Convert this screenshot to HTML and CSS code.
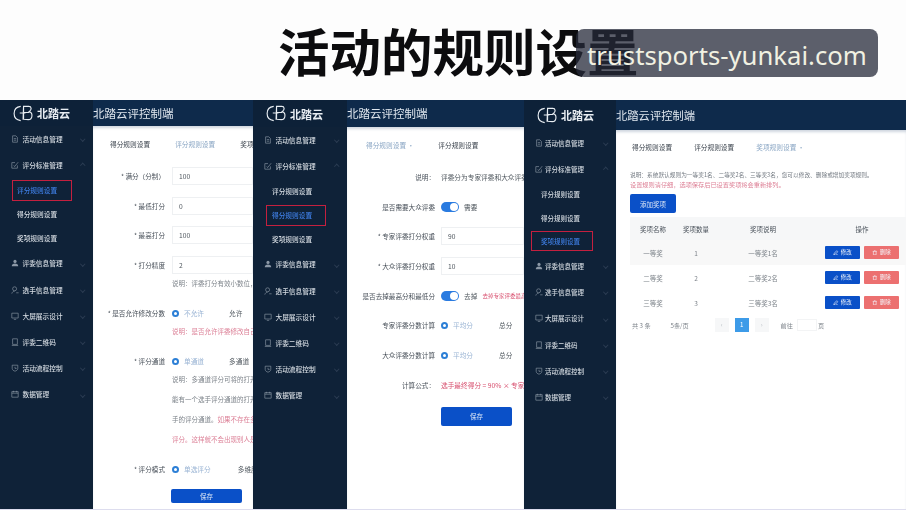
FILE: index.html
```html
<!DOCTYPE html>
<html lang="zh">
<head>
<meta charset="utf-8">
<title>活动的规则设置</title>
<link rel="stylesheet" href="styles.css">
</head>
<body>
<svg class="defs" aria-hidden="true">
  <symbol id="logo" viewBox="0 0 24 18"><path d="M8 1.500C3.500 2 1 5 1 9s2.500 7 7 7.500M11 1.500h5.500c3 0 3.500 3.500.5 5.500 4 1 4 8.500-1 8.500-3 0-5-.5-5.500-.5zM11 8h6M7 8.500h6M11 1.500v14" fill="none" stroke="currentColor" stroke-width="1.200"/></symbol>
  <symbol id="i-doc" viewBox="0 0 10 10"><path d="M2 1h4l2 2v6H2zM3.500 4.500h3M3.500 6.500h3" fill="none" stroke="currentColor" stroke-width=".8"/></symbol>
  <symbol id="i-edit" viewBox="0 0 10 10"><path d="M8 5.500V9H1V2h4M3.500 5.500l1 1.500L9 1.500" fill="none" stroke="currentColor" stroke-width=".8"/></symbol>
  <symbol id="i-user" viewBox="0 0 10 10"><circle cx="5" cy="3" r="2" fill="currentColor"/><path d="M1 9c0-2.500 1.500-3.500 4-3.500s4 1 4 3.500z" fill="currentColor"/></symbol>
  <symbol id="i-person" viewBox="0 0 10 10"><circle cx="4.500" cy="3.500" r="2.500" fill="none" stroke="currentColor" stroke-width=".8"/><path d="M1 9.500c.5-2 2-3 3.500-3M6.500 8.500h3" fill="none" stroke="currentColor" stroke-width=".8"/></symbol>
  <symbol id="i-screen" viewBox="0 0 10 10"><path d="M1 1.500h8v6H1zM3.500 9.200h3" fill="none" stroke="currentColor" stroke-width=".8"/></symbol>
  <symbol id="i-tablet" viewBox="0 0 10 10"><path d="M2 1h6v7H2zM1 9.300h8" fill="none" stroke="currentColor" stroke-width=".8"/></symbol>
  <symbol id="i-flow" viewBox="0 0 10 10"><path d="M1.500 1.500h7v4c0 2-2 3-3.500 3.500-1.500-.5-3.500-1.500-3.500-3.500zM5 3.500v2h2" fill="none" stroke="currentColor" stroke-width=".8"/></symbol>
  <symbol id="i-data" viewBox="0 0 10 10"><path d="M1 2h8v7H1zM1 4h8M3 1v2M7 1v2" fill="none" stroke="currentColor" stroke-width=".8"/></symbol>
  <symbol id="i-pen" viewBox="0 0 8 8"><path d="M1 7l1-2.500L5.500 1 7 2.500 3.500 6zM4 7h3" fill="none" stroke="currentColor" stroke-width=".9"/></symbol>
  <symbol id="i-bin" viewBox="0 0 8 8"><path d="M1 2h6M2 2v5h4V2M3 1h2" fill="none" stroke="currentColor" stroke-width=".9"/></symbol>
</svg>

<header class="head"><h1 class="title">活动的规则设置</h1></header>
<div class="stamp">trustsports-yunkai.com</div>

<main class="screens">

  <section class="panel p1">
    <div class="brand"><svg class="logo"><use href="#logo"/></svg><b>北踏云</b></div>
    <div class="top">北踏云评控制端</div>
    <nav class="side">
      <a class="item"><svg class="ic"><use href="#i-doc"/></svg>活动信息管理<i class="chev"></i></a>
      <a class="item"><svg class="ic"><use href="#i-edit"/></svg>评分标准管理<i class="chev up"></i></a>
      <a class="sub on">评分规则设置</a>
      <a class="sub">得分规则设置</a>
      <a class="sub">奖项规则设置</a>
      <a class="item"><svg class="ic"><use href="#i-user"/></svg>评委信息管理<i class="chev"></i></a>
      <a class="item"><svg class="ic"><use href="#i-person"/></svg>选手信息管理<i class="chev"></i></a>
      <a class="item"><svg class="ic"><use href="#i-screen"/></svg>大屏展示设计<i class="chev"></i></a>
      <a class="item"><svg class="ic"><use href="#i-tablet"/></svg>评委二维码<i class="chev"></i></a>
      <a class="item"><svg class="ic"><use href="#i-flow"/></svg>活动流程控制<i class="chev"></i></a>
      <a class="item"><svg class="ic"><use href="#i-data"/></svg>数据管理<i class="chev"></i></a>
    </nav>
    <div class="main">
      <div class="tabs"><span class="tab">得分规则设置</span><span class="tab cur">评分规则设置</span><span class="tab">奖项规则设置</span></div>
      <div class="form">
        <div class="frow"><label>* 满分（分制）</label><span class="input">100</span></div>
        <div class="frow"><label>* 最低打分</label><span class="input">0</span></div>
        <div class="frow"><label>* 最高打分</label><span class="input">100</span></div>
        <div class="frow tight"><label>* 打分精度</label><span class="input">2</span></div>
        <p class="note end">说明：评委打分有效小数位，0为整数</p>
        <div class="frow tight"><label>* 是否允许修改分数</label><span class="radio"></span><span class="opt sel w1">不允许</span><span class="opt">允许</span></div>
        <p class="note end pink">说明：是否允许评委修改自己的评分</p>
        <div class="frow tight"><label>* 评分通道</label><span class="radio"></span><span class="opt sel w1">单通道</span><span class="opt">多通道</span></div>
        <p class="note">说明：多通道评分可将的打开</p>
        <p class="note">能有一个选手评分通道的打开</p>
        <p class="note">手的评分通道。<span class="pink">如果不存在多</span></p>
        <p class="note end pink">评分。这样就不会出现别人是否</p>
        <div class="frow last"><label>* 评分模式</label><span class="radio"></span><span class="opt sel w2">单选评分</span><span class="opt">多维度</span></div>
        <button class="save thin">保存</button>
      </div>
    </div>
  </section>

  <section class="panel p2">
    <div class="brand"><svg class="logo"><use href="#logo"/></svg><b>北踏云</b></div>
    <div class="top">北踏云评控制端</div>
    <nav class="side">
      <a class="item"><svg class="ic"><use href="#i-doc"/></svg>活动信息管理<i class="chev"></i></a>
      <a class="item"><svg class="ic"><use href="#i-edit"/></svg>评分标准管理<i class="chev up"></i></a>
      <a class="sub">评分规则设置</a>
      <a class="sub on">得分规则设置</a>
      <a class="sub">奖项规则设置</a>
      <a class="item"><svg class="ic"><use href="#i-user"/></svg>评委信息管理<i class="chev"></i></a>
      <a class="item"><svg class="ic"><use href="#i-person"/></svg>选手信息管理<i class="chev"></i></a>
      <a class="item"><svg class="ic"><use href="#i-screen"/></svg>大屏展示设计<i class="chev"></i></a>
      <a class="item"><svg class="ic"><use href="#i-tablet"/></svg>评委二维码<i class="chev"></i></a>
      <a class="item"><svg class="ic"><use href="#i-flow"/></svg>活动流程控制<i class="chev"></i></a>
      <a class="item"><svg class="ic"><use href="#i-data"/></svg>数据管理<i class="chev"></i></a>
    </nav>
    <div class="main">
      <div class="tabs"><span class="tab cur">得分规则设置 ·</span><span class="tab">评分规则设置</span></div>
      <div class="form">
        <div class="frow"><label>说明：</label><span class="txt">评委分为专家评委和大众评委</span></div>
        <div class="frow"><label>是否需要大众评委</label><span class="toggle"></span><span class="txt">需要</span></div>
        <div class="frow"><label>* 专家评委打分权重</label><span class="input">90</span></div>
        <div class="frow"><label>* 大众评委打分权重</label><span class="input">10</span></div>
        <div class="frow"><label>是否去掉最高分和最低分</label><span class="toggle"></span><span class="txt">去掉</span><span class="txt pink gap">去掉专家评委最高</span></div>
        <div class="frow"><label>专家评委分数计算</label><span class="radio"></span><span class="opt sel w3">平均分</span><span class="opt">总分</span></div>
        <div class="frow"><label>大众评委分数计算</label><span class="radio"></span><span class="opt sel w3">平均分</span><span class="opt">总分</span></div>
        <div class="frow last2"><label>计算公式：</label><span class="txt pink">选手最终得分 = 90% × 专家评</span></div>
        <button class="save">保存</button>
      </div>
    </div>
  </section>

  <section class="panel p3">
    <div class="brand"><svg class="logo"><use href="#logo"/></svg><b>北踏云</b></div>
    <div class="top">北踏云评控制端</div>
    <nav class="side">
      <a class="item"><svg class="ic"><use href="#i-doc"/></svg>活动信息管理<i class="chev"></i></a>
      <a class="item"><svg class="ic"><use href="#i-edit"/></svg>评分标准管理<i class="chev up"></i></a>
      <a class="sub">评分规则设置</a>
      <a class="sub">得分规则设置</a>
      <a class="sub on">奖项规则设置</a>
      <a class="item"><svg class="ic"><use href="#i-user"/></svg>评委信息管理<i class="chev"></i></a>
      <a class="item"><svg class="ic"><use href="#i-person"/></svg>选手信息管理<i class="chev"></i></a>
      <a class="item"><svg class="ic"><use href="#i-screen"/></svg>大屏展示设计<i class="chev"></i></a>
      <a class="item"><svg class="ic"><use href="#i-tablet"/></svg>评委二维码<i class="chev"></i></a>
      <a class="item"><svg class="ic"><use href="#i-flow"/></svg>活动流程控制<i class="chev"></i></a>
      <a class="item"><svg class="ic"><use href="#i-data"/></svg>数据管理<i class="chev"></i></a>
    </nav>
    <div class="main">
      <div class="tabs"><span class="tab">得分规则设置</span><span class="tab">评分规则设置</span><span class="tab cur">奖项规则设置 ·</span></div>
      <p class="desc">说明：系统默认规则为一等奖1名、二等奖2名、三等奖3名，您可以修改、删除或增加奖项规则。</p>
      <p class="desc pink">设置规则请仔细，选项保存后已设置奖项将会重新排列。</p>
      <button class="add">添加奖项</button>
      <div class="trow thead"><span>奖项名称</span><span>奖项数量</span><span>奖项说明</span><span class="ophead">操作</span></div>
      <div class="trow shade"><span>一等奖</span><span>1</span><span>一等奖1名</span><span class="ops"><button class="b-edit"><svg class="bi"><use href="#i-pen"/></svg>修改</button><button class="b-del"><svg class="bi"><use href="#i-bin"/></svg>删除</button></span></div>
      <div class="trow"><span>二等奖</span><span>2</span><span>二等奖2名</span><span class="ops"><button class="b-edit"><svg class="bi"><use href="#i-pen"/></svg>修改</button><button class="b-del"><svg class="bi"><use href="#i-bin"/></svg>删除</button></span></div>
      <div class="trow"><span>三等奖</span><span>3</span><span>三等奖3名</span><span class="ops"><button class="b-edit"><svg class="bi"><use href="#i-pen"/></svg>修改</button><button class="b-del"><svg class="bi"><use href="#i-bin"/></svg>删除</button></span></div>
      <div class="pager"><span>共 3 条</span><span class="size">5条/页</span><span class="pg">‹</span><span class="pg cur">1</span><span class="pg">›</span><span class="goto">前往</span><span class="jump"></span><span>页</span></div>
    </div>
  </section>

</main>
</body>
</html>
```
FILE: styles.css
```css
* { box-sizing: border-box; }
html, body { margin: 0; height: 100%; }
body {
  width: 906px; height: 510px; overflow: hidden; position: relative;
  background: #fdfdfd;
  font-family: "Noto Sans CJK SC", "Noto Sans", sans-serif;
  display: flex; flex-direction: column;
}
.defs { position: absolute; width: 0; height: 0; }

.head { height: 100px; padding: 15px 0 0 278px; flex: none; }
.title { margin: 0; font-size: 51.500px; line-height: 70px; font-weight: 700; color: #0c0c0e; white-space: nowrap; }

.stamp {
  position: absolute; left: 576px; top: 29px; width: 302px; height: 48px;
  border-radius: 8px; background: rgba(38, 42, 58, .75);
  color: #f1f1e2; font: 25.700px/54px "Noto Sans", sans-serif; text-align: center; white-space: nowrap;
}

.screens { flex: 1; display: flex; min-height: 0; filter: blur(.55px); border-bottom: 1px solid #dde; }
.panel { display: grid; min-width: 0; overflow: hidden; background: #0f2238; }
.p1 { width: 253px; grid-template-columns: 93px 1fr; grid-template-rows: 26px 1fr; }
.p2 { width: 271px; grid-template-columns: 94px 1fr; grid-template-rows: 27px 1fr; }
.p3 { flex: 1; grid-template-columns: 92px 1fr; grid-template-rows: 30px 1fr; }

.brand { display: flex; align-items: center; padding-left: 13px; gap: 1px; color: #e8edf2; background: #0d2138; }
.brand b { font-size: 11px; white-space: nowrap; }
.logo { width: 23px; height: 17px; flex: none; }
.top { background: #0e2a4b; color: #dfe6ee; font-size: 11.500px; line-height: 26px; white-space: nowrap; }
.p3 .top { line-height: 30px; font-size: 11.300px; }

.side { color: #d8dee4; font-size: 6.700px; font-weight: 500; }
.p3 .side { font-size: 6.500px; }
.item { height: 26.200px; display: flex; align-items: center; padding-left: 11px; white-space: nowrap; }
.ic { width: 8px; height: 8px; margin-right: 3.500px; color: #8c98a6; flex: none; }
.p3 .ic { margin-right: 2px; }
.chev { width: 3.500px; height: 3.500px; margin-left: auto; margin-right: 9px; border-right: 1px solid #2b3c52; border-bottom: 1px solid #2b3c52; transform: rotate(45deg); }
.chev.up { transform: rotate(225deg); }
.sub { height: 24px; display: flex; align-items: center; padding-left: 17px; white-space: nowrap; position: relative; }
.p2 .sub { padding-left: 19px; }
.p3 .sub { height: 23.500px; padding-left: 17px; }
.sub.on { color: #3f7fe6; }
.sub.on::after { content: ""; position: absolute; left: 12px; right: 21px; top: 1.500px; bottom: 1.500px; border: 1.400px solid #c4203f; }
.p2 .sub.on::after { left: 13px; }
.p3 .sub.on::after { left: 7px; right: 23px; }

.main { background: #fff; min-width: 0; overflow: hidden; box-shadow: inset 0 3px 3px -1px #cfd6df; font-size: 6.700px; color: #50585f; }
.tabs { display: flex; height: 36px; align-items: center; white-space: nowrap; }
.p1 .tabs { padding-left: 17px; gap: 25px; }
.p2 .tabs { padding-left: 19px; gap: 24px; }
.p3 .tabs { height: 34px; padding-left: 16px; gap: 22px; }
.tab { color: #3b434d; flex: none; }
.tab.cur { color: #8aa6c4; }

.form { display: flex; flex-direction: column; padding-top: 6px; }
.frow { height: 16px; margin-bottom: 13.700px; display: flex; align-items: center; white-space: nowrap; flex: none; }
.frow label { flex: none; text-align: right; color: #474f58; font-size: 6.600px; }
.p1 .frow label { width: 72px; margin-right: 7px; }
.p2 .frow label { width: 88px; margin-right: 6px; }
.frow.tight { margin-bottom: 3px; }
.frow.last { margin-bottom: 12px; }
.frow.last2 { margin-bottom: 14px; }
.input { flex: 1; height: 18px; line-height: 16px; padding-left: 6px; border: 1px solid #eef0f2; color: #50585f; }
.note { margin: 0 0 6px 79px; height: 14px; line-height: 14px; white-space: nowrap; color: #7d838a; font-size: 6.500px; }
.note.end { margin-bottom: 15px; }
.pink { color: #d8506f; }
.note.pink, .note .pink { color: #dc8097; }
.radio { width: 7px; height: 7px; border-radius: 50%; background: #fff; border: 2px solid #2c7fd6; flex: none; margin-right: 5px; }
.p2 .radio { margin-left: 0; margin-right: 5px; }
.opt { color: #50585f; flex: none; }
.opt.sel { color: #9ab4d4; }
.w1 { margin-right: 25px; }
.w2 { margin-right: 27px; }
.w3 { margin-right: 26px; }
.txt { color: #50585f; flex: none; }
.txt.pink { color: #d8506f; }
.gap { margin-left: 5px; font-size: 5.500px; }
.toggle { width: 18px; height: 10px; border-radius: 5px; background: #2a7be0; position: relative; flex: none; margin-right: 5px; }
.toggle::after { content: ""; position: absolute; right: 1px; top: 1px; width: 8px; height: 8px; border-radius: 50%; background: #fff; }
.save { width: 71px; height: 19px; border: 0; border-radius: 2px; background: #0a50c8; color: #dfe8f6; font: 6.500px "Noto Sans CJK SC", sans-serif; flex: none; padding: 0; }
.p1 .save { margin-left: 78px; }
.p2 .save { margin-left: 94px; }
.save.thin { height: 14px; }

.desc { margin: 0 0 0 14px; height: 10px; line-height: 10px; font-size: 5.700px; white-space: nowrap; color: #747b83; }
.tabs + .desc { margin-top: 6px; }
.desc.pink { color: #dd7f95; font-size: 6.200px; }
.add { display: block; margin: 4px 0 4px 14px; width: 46px; height: 19px; border: 0; border-radius: 2px; background: #0a50c8; color: #dde7f6; font: 6.500px "Noto Sans CJK SC", sans-serif; padding: 0; }
.trow { margin-left: 14px; height: 25px; display: grid; grid-template-columns: 46px 40px 94px 1fr; align-items: center; text-align: center; white-space: nowrap; color: #7d838a; font-size: 6.500px; }
.thead { background: #f6f7f8; color: #474f58; height: 23px; }
.ophead { padding-left: 8px; }
.shade { background: #f8f8f8; }
.ops { display: flex; justify-content: center; gap: 4px; padding-left: 8px; }
.ops button { width: 35px; height: 13.500px; border: 0; border-radius: 1px; padding: 0; display: flex; align-items: center; justify-content: center; gap: 2px; font: 5.500px/13px "Noto Sans CJK SC", sans-serif; color: #f3f6fb; }
.bi { width: 5.500px; height: 5.500px; flex: none; }
.b-edit { background: #0a50c8; }
.b-del { background: #ec7070; }
.pager { margin: 3px 0 0 16px; height: 14px; display: flex; align-items: center; color: #7d838a; font-size: 6.200px; white-space: nowrap; }
.size { width: 42px; margin-left: 8px; text-align: center; }
.pg { width: 14px; height: 14px; margin-left: 6px; background: #f6f7f8; color: #b7bcc2; text-align: center; line-height: 14px; }
.size + .pg { margin-left: 14px; }
.pg.cur { background: #3d9be8; color: #fff; }
.goto { margin-left: 12px; }
.jump { width: 20px; height: 12px; margin: 0 1px 0 4px; border: 1px solid #f3f4f5; }
```
